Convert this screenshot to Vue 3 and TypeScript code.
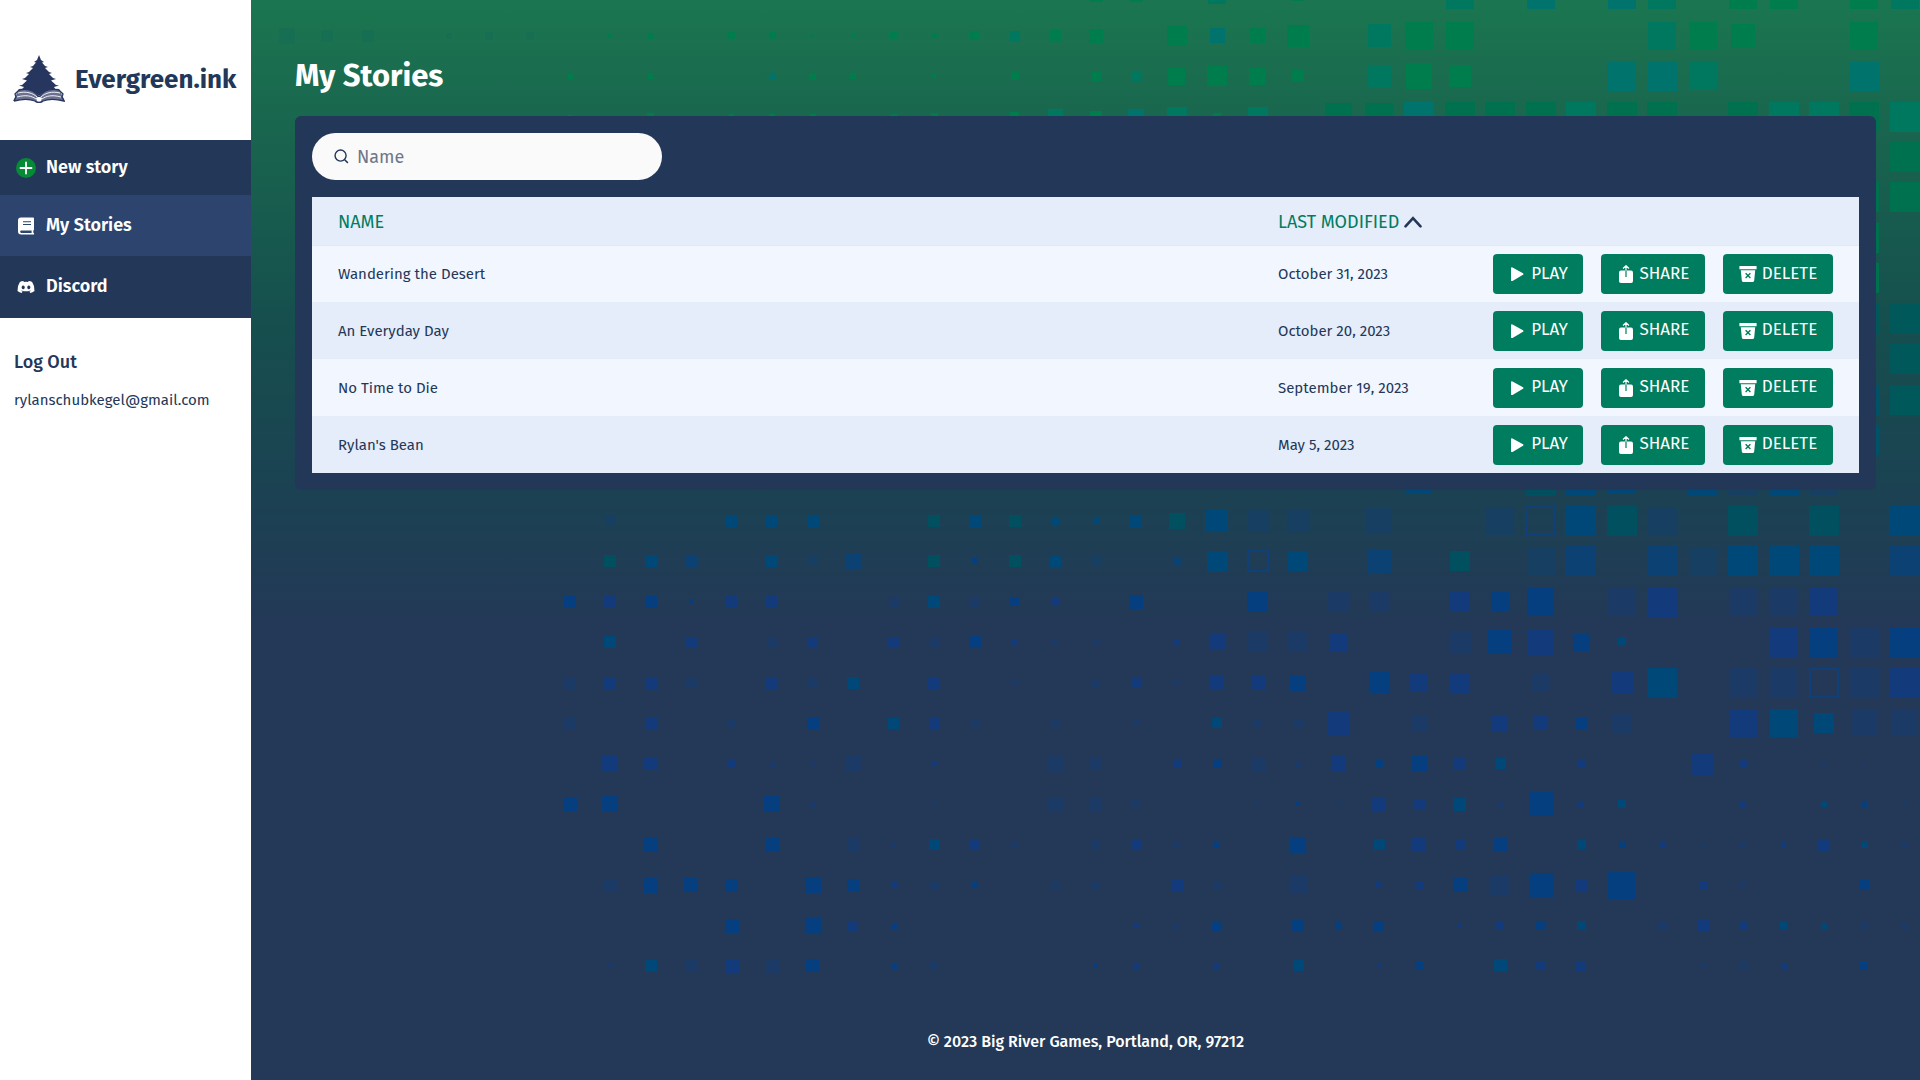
<script setup lang="ts">
import { ref, computed } from 'vue'

interface Story {
  name: string
  modified: string
}

interface Tile {
  x: number
  y: number
  size: number
  kind: string
  outline: boolean
}

const query = ref('')
const stories: Story[] = [
  { name: 'Wandering the Desert', modified: 'October 31, 2023' },
  { name: 'An Everyday Day', modified: 'October 20, 2023' },
  { name: 'No Time to Die', modified: 'September 19, 2023' },
  { name: "Rylan's Bean", modified: 'May 5, 2023' },
]
const visible = computed(() =>
  stories.filter((s) => s.name.toLowerCase().includes(query.value.toLowerCase())),
)

// Backdrop mosaic: one entry per row, each tile written as column + colour key + size.
const mosaic: Record<string, string> = {
  '-13': '13G14 14G14 16T18 18G12 22T28 24S28 26S28 27T28 29G28 30G28 32G28 33T28',
  '-12':
    '-7F16 -6F12 -5F12 -3F6 -2F8 -1F8 1G4 2G6 4G7 5G7 6G3 7G3 8G7 9G5 10G9 11T10 12G11 13G14 15G20 16S15 17G15 18G22 20T23 21G28 22G28 27T28 28G28 29G24 32G28',
  '-11':
    '0G5 2G6 5S7 6G7 7G6 9G4 11G8 13G10 14T9 15G17 16G20 17G17 18G12 20T23 21G26 22G22 26S29 27S29 28T28 32S29',
  '-10':
    '0G4 2G7 4G5 5G6 6G6 8G6 9G7 11G9 12T15 13G12 14S16 15T20 16G8 17T20 19D27 20D28 21S30 22D30 23D30 24D30 25T30 26D30 27D30 29D30 30T30 31T30 32D30 33T30',
  '-9': '33D30',
  '-8': '32D30 33D30',
  '-7': '32D30',
  '-6': '32D30',
  '-5': '32d30 33d30',
  '-4': '33d30',
  '-3': '32u30 33d30',
  '-2': '32u30',
  '-1': '21t26 24g30 25t30 26t27 28t30 29e30 30t30 31e28',
  '0': '1e10 4t12 5t12 6t12 9g12 10t12 11g12 12t9 13t6 14t12 15g16 16t22 17e22 18e22 20e26 23e28 24o30 25t30 26g30 27e29 29g30 31g30 33t30',
  '1': '1g12 2t12 3h12 5t12 6e10 7h16 9g12 10b6 11g12 12t11 13e10 15h8 16t21 17o22 18t20 20h24 22g20 24e28 25h30 27h30 28e28 29t30 30t30 31t30 33h30',
  '2': '0b12 1i12 2b12 3b5 4i11 5i12 8f10 9t12 10f10 11b9 12i8 14b14 17b21 19f21 20f21 22i20 23b19 24b27 26f28 27i30 29f28 30f28 31i29',
  '3': '1t12 3i11 5f10 6i11 8i11 9f11 10b12 11i7 12f6 13f6 15i7 16i16 17f20 18f20 19i18 22f22 23b24 24i27 25b17 26t8 30i29 31b29 32f29 33b30',
  '4': '0f12 1i12 2i12 3f11 5i12 6f11 7t12 9i12 11f5 13f8 14i9 15f6 16i14 17i14 18b16 20b21 21i18 22i20 24f18 26i22 27t30 29f29 30f29 31o30 32f29 33i30',
  '5': '0f12 2i12 4f9 6b12 8t11 9i11 10f8 12f8 14f6 16t10 17f8 18f9 19i23 21f15 23i16 24i14 25b11 26f21 29i28 30t28 31t20 32f26 33f26',
  '6': '1i16 2i13 4i9 5f6 6f5 7f16 9i5 12f17 13f13 15i8 16b9 17f14 18f6 19i15 20b7 21b15 22i12 23t11 25i8 28i22 29i7 31f5 32f3',
  '7': '0b14 1b16 5b16 6f5 9f4 12f15 13f13 14f8 17f4 18b4 19f4 20i14 21i11 22t13 23f6 24b24 25i6 26t8 29i6 31t6 32b5 33b3',
  '8': '2b15 5b13 7f13 8f5 9t11 10i11 11f6 13f9 14i10 15f5 16b6 18b16 20t11 21i14 22i10 23b13 25t9 26b6 27i7 28f4 29f6 30i5 31i12 32t7 33f5',
  '9': '1f13 2b15 3b14 4b13 6b16 7b12 8i6 9f9 10b6 12f8 13f9 15i12 16f8 18f18 20i6 21i9 22b14 23f20 24b24 25i12 26b27 28i8 29f6 32b10',
  '10': '4b14 6b16 7i10 8b6 14i5 15f6 16b10 18b12 19b7 20b10 22i4 23i8 24b9 25t9 27f9 28i12 29i9 30t7 31t6 32f7 33f6',
  '11': '1f5 2t12 3f13 4i14 5f14 6b13 8b6 9f8 13b4 14i6 16i6 18t11 20i5 21b8 23t13 24i9 25i10 28f5 29f7 30i6 32b8',
}
const palette: Record<string, string> = {
  G: '#007d4d',
  D: '#00714e',
  T: '#00785f',
  S: '#00746c',
  F: '#166f52',
  d: '#00585a',
  u: '#005266',
  g: '#00505f',
  t: '#004878',
  b: '#063f80',
  i: '#133b7b',
  h: '#0b4173',
  f: '#1b3b66',
  e: '#173f61',
  o: '#10407a',
}
const pitch = 40.45
const tiles: Tile[] = Object.entries(mosaic).flatMap(([row, line]) =>
  line.split(' ').map((token) => {
    const [, col, kind, size] = token.match(/^(-?\d+)([A-Za-z])(\d+)$/) as RegExpMatchArray
    const s = Number(size)
    return {
      x: Math.round(319 + Number(col) * pitch - s / 2),
      y: Math.round(521 + Number(row) * pitch - s / 2),
      size: s,
      kind,
      outline: kind === 'o',
    }
  }),
)
</script>

<template>
  <div class="shell">
    <aside class="sidebar">
      <a class="brand" href="#">
        <svg class="brand-mark" viewBox="0 0 52 48" aria-hidden="true">
          <path
            fill="#26365f"
            d="M26 0 28 5 31 7 29 7.500 32 11 35 12 32 13 36 17 39 18 36 19 40 23 43 24 38 25.500 43 30 46 30.500 41 32 43 35 40 35C34 35 29 38 26 41 23 38 18 35 12 35L8 35 11 32 6 30.500 9 30 14 25.500 9 24 12 23 16 19 13 18 16 17 20 13 17 12 20 11 23 7.500 21 7 24 5Z"
          />
          <path
            fill="#6b7091"
            d="M6 34C15 33 22 36 26 42 30 36 37 33 46 34L52 46C43 44 35 44 30 46 28 48 24 48 22 46 17 44 9 44 0 46Z"
          />
          <path
            fill="none"
            stroke="#26365f"
            stroke-width="1.300"
            d="M1 46 3 42 2 39 6 35C15 33 22 36 26 42 30 36 37 33 46 35L50 39 49 42 51 46C43 44 35 44 30 46 28 48 24 48 22 46 17 44 9 44 1 46"
          />
          <path
            fill="none"
            stroke="#fff"
            stroke-width="0.900"
            d="M5 38C13 36 20 38 24 42M47 38C39 36 32 38 28 42M4 42C13 39.500 19 41 23 44M48 42C39 39.500 33 41 29 44"
          />
          <path fill="#fff" d="M23 43Q26 41 29 43L28 46Q26 47 24 46Z" />
        </svg>
        <span>Evergreen.ink</span>
      </a>
      <nav class="nav">
        <a href="#" class="new">
          <svg viewBox="0 0 20 20" aria-hidden="true">
            <circle cx="10" cy="10" r="10" fill="#078a35" />
            <path d="M10 4.500v11M4.500 10h11" stroke="#fff" stroke-width="1.800" stroke-linecap="round" />
          </svg>
          New story
        </a>
        <a href="#" class="active">
          <svg viewBox="0 0 20 20" aria-hidden="true">
            <path
              fill="#fff"
              fill-rule="evenodd"
              d="M5 1.500h12a1 1 0 0 1 1 1v11a1 1 0 0 1-.7 1v2.300a.85.85 0 0 1 0 1.700H5.200A3.200 3.200 0 0 1 2 15.300V4.500a3 3 0 0 1 3-3ZM7 5.200v1.100h8V5.200ZM7 7.900V9h8V7.900ZM5.300 14.600a1.150 1.150 0 0 0 0 2.300H15.600V14.600Z"
            />
          </svg>
          My Stories
        </a>
        <a href="#">
          <svg viewBox="0 0 20 20" aria-hidden="true">
            <path
              fill="#fff"
              fill-rule="evenodd"
              d="M7.400 4 7.900 5Q10 4.600 12.100 5L12.600 4Q14.500 4.200 16.100 5.100 18.900 9.200 18.500 14 16.600 15.500 14.300 16L13.400 14.500 14.700 13.900 14.300 13.500Q10 15.200 5.700 13.500L5.300 13.900 6.600 14.500 5.700 16Q3.400 15.500 1.500 14 1.100 9.200 3.900 5.100 5.500 4.200 7.400 4ZM7.200 8.600a1.600 1.800 0 1 0 .01 0ZM12.800 8.600a1.600 1.800 0 1 0 .01 0Z"
            />
          </svg>
          Discord
        </a>
      </nav>
      <div class="account">
        <a href="#" class="logout">Log Out</a>
        <span class="email">rylanschubkegel@gmail.com</span>
      </div>
    </aside>

    <main class="main">
      <svg class="mosaic" viewBox="0 0 1669 1080" preserveAspectRatio="xMaxYMin slice" aria-hidden="true">
        <template v-for="(t, n) in tiles" :key="n">
          <rect
            v-if="t.outline"
            :x="t.x + 1"
            :y="t.y + 1"
            :width="t.size - 2"
            :height="t.size - 2"
            fill="none"
            :stroke="palette.o"
            stroke-width="2"
          />
          <rect v-else :x="t.x" :y="t.y" :width="t.size" :height="t.size" :fill="palette[t.kind]" />
        </template>
      </svg>

      <div class="content">
        <h1>My Stories</h1>
        <section class="panel">
          <label class="search">
            <svg viewBox="0 0 16 16" aria-hidden="true">
              <circle cx="7" cy="7" r="5.900" fill="none" stroke="#233858" stroke-width="1.500" />
              <path d="m11.400 11.400 3.400 3.400" stroke="#233858" stroke-width="1.600" />
            </svg>
            <input v-model="query" type="text" placeholder="Name" aria-label="Name" />
          </label>
          <table>
            <thead>
              <tr>
                <th class="name">Name</th>
                <th class="date">
                  Last Modified
                  <svg viewBox="0 0 18 12" aria-hidden="true">
                    <path
                      d="M1.500 10.300 9 2.200l7.500 8.100"
                      fill="none"
                      stroke="#233858"
                      stroke-width="2.600"
                      stroke-linecap="round"
                    />
                  </svg>
                </th>
                <th></th>
              </tr>
            </thead>
            <tbody>
              <tr v-for="s in visible" :key="s.name">
                <td class="name">{{ s.name }}</td>
                <td class="date">{{ s.modified }}</td>
                <td>
                  <div class="actions">
                    <button type="button" class="play">
                      <svg viewBox="0 0 18 18" aria-hidden="true">
                        <path
                          fill="#fff"
                          d="M3 3.300Q3 1.600 4.500 2.400L15 8.200Q16.200 9 15 9.800L4.500 15.900Q3 16.600 3 14.900Z"
                        />
                      </svg>
                      Play
                    </button>
                    <button type="button" class="share">
                      <svg viewBox="0 0 18 18" aria-hidden="true">
                        <path fill="#fff" d="M4 5.500h10q2 0 2 2v8.500q0 2-2 2H4q-2 0-2-2V7.500q0-2 2-2Z" />
                        <path d="M9 5.500v6.500" stroke="#007d5e" stroke-width="1.200" />
                        <path d="M9 5.500V.8M6 3.500 9 .7l3 2.800" fill="none" stroke="#fff" stroke-width="1.200" />
                      </svg>
                      Share
                    </button>
                    <button type="button" class="delete">
                      <svg viewBox="0 0 18 18" aria-hidden="true">
                        <path
                          fill="#fff"
                          d="M.4 1h17.200v3.200H.4ZM1.800 5.300h14.400L15.200 15.500Q15 17 13.500 17h-9Q3 17 2.800 15.500Z"
                        />
                        <path d="m6.600 8.300 4.800 4.800m0-4.800-4.800 4.800" stroke="#007d5e" stroke-width="1.400" />
                      </svg>
                      Delete
                    </button>
                  </div>
                </td>
              </tr>
            </tbody>
          </table>
        </section>
      </div>
      <footer>© 2023 Big River Games, Portland, OR, 97212</footer>
    </main>
  </div>
</template>

<style>
body {
  margin: 0;
}
</style>

<style scoped>
.shell {
  display: flex;
  min-height: 100vh;
  font-family: 'Fira Sans', Roboto, 'Noto Sans', sans-serif;
  color: #233858;
  background: #fff;
}
a {
  color: inherit;
  text-decoration: none;
}
.sidebar {
  flex: 0 0 251px;
  background: #fff;
}
.brand {
  display: flex;
  align-items: center;
  gap: 10px;
  height: 140px;
  padding: 18px 0 0 13px;
  box-sizing: border-box;
  font-size: 26px;
  font-weight: 700;
}
.brand-mark {
  width: 52px;
  height: 48px;
}
.nav {
  background: #233858;
  color: #fff;
  font-size: 18px;
  font-weight: 600;
}
.nav a {
  display: flex;
  align-items: center;
  gap: 10px;
  height: 62px;
  padding: 0 16px 2px;
  box-sizing: border-box;
}
.nav .new {
  height: 55px;
}
.nav .active {
  height: 61px;
  background: #2d456e;
}
.nav svg {
  width: 20px;
  height: 20px;
  margin-top: 2px;
}
.account {
  display: flex;
  flex-direction: column;
  gap: 16px;
  padding: 32px 14px;
}
.logout {
  font-size: 18px;
  font-weight: 500;
  line-height: 24px;
}
.email {
  font-size: 15px;
  line-height: 20px;
}
.main {
  position: relative;
  flex: 1;
  min-width: 0;
  display: flex;
  flex-direction: column;
  background: linear-gradient(#1b7650, #19644e 140px, #164f4e 320px, #1b4252 490px, #233957 620px);
}
.mosaic {
  position: absolute;
  inset: 0;
  width: 100%;
  height: 100%;
}
.content {
  position: relative;
  flex: 1;
  padding: 56px 44px 0;
}
h1 {
  margin: 0 0 20px;
  font-size: 31px;
  line-height: 40px;
  font-weight: 700;
  color: #fff;
}
.panel {
  padding: 17px;
  border-radius: 6px;
  background: #233858;
}
.search {
  display: flex;
  align-items: center;
  gap: 8px;
  width: 350px;
  height: 47px;
  margin-bottom: 17px;
  padding: 0 22px;
  box-sizing: border-box;
  border-radius: 24px;
  background: #fafafa;
}
.search svg {
  flex: none;
  width: 15px;
  height: 15px;
}
.search input {
  flex: 1;
  min-width: 0;
  border: 0;
  padding: 0;
  outline: 0;
  background: transparent;
  font: inherit;
  font-size: 18px;
  color: #233858;
}
.search input::placeholder {
  color: #6e7689;
  opacity: 1;
}
table {
  width: 100%;
  border-spacing: 0;
  background: #f2f6ff;
}
th,
td {
  padding: 0 26px;
  text-align: left;
}
th {
  height: 46px;
  padding-top: 2px;
  border-bottom: 1px solid #e4e8ea;
  background: #e5ecfa;
  color: #007d5e;
  font-size: 18px;
  font-weight: 400;
  text-transform: uppercase;
  white-space: nowrap;
}
th svg {
  width: 18px;
  height: 12px;
}
td {
  height: 57px;
  font-size: 15px;
}
tr:first-child td {
  height: 56px;
}
tbody tr:nth-child(even) {
  background: #e5ecfa;
}
td.date,
th.date {
  width: 215px;
  padding-left: 0;
  padding-right: 0;
}
td:last-child,
th:last-child {
  width: 340px;
  padding-left: 0;
}
.actions {
  display: flex;
  justify-content: flex-end;
  gap: 18px;
}
button {
  display: flex;
  align-items: center;
  justify-content: center;
  gap: 5px;
  height: 40px;
  padding: 0 0 2px;
  border: 0;
  border-radius: 4px;
  background: #007d5e;
  color: #fff;
  font-family: inherit;
  font-size: 17px;
  text-transform: uppercase;
}
button svg {
  width: 18px;
  height: 18px;
  margin-top: 2px;
}
.play {
  width: 90px;
}
.share {
  width: 104px;
}
.delete {
  width: 110px;
}
footer {
  position: relative;
  padding-bottom: 26px;
  text-align: center;
  color: #fff;
  font-size: 16px;
  font-weight: 500;
  line-height: 24px;
}
</style>
